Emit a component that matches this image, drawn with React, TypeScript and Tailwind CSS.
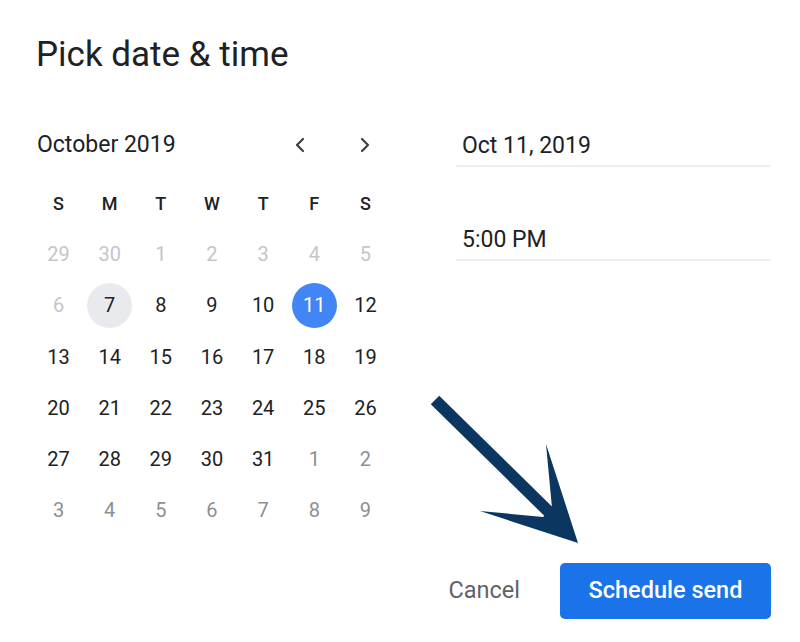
import { ChevronLeft, ChevronRight } from "lucide-react";

const WEEKDAYS = ["S", "M", "T", "W", "T", "F", "S"];

type Day = { n: number; kind: "past" | "cur" | "next"; state?: "today" | "selected" };

const DAYS: Day[] = [
  ...[29, 30, 1, 2, 3, 4, 5, 6].map((n) => ({ n, kind: "past" as const })),
  ...Array.from({ length: 31 }, (_, i) => i + 1)
    .filter((n) => n >= 7)
    .map((n) => ({
      n,
      kind: "cur" as const,
      state: n === 7 ? ("today" as const) : n === 11 ? ("selected" as const) : undefined,
    })),
  ...[1, 2, 3, 4, 5, 6, 7, 8, 9].map((n) => ({ n, kind: "next" as const })),
];

function DayCell({ day }: { day: Day }) {
  let circle = "";
  let text = "text-[#202124]";
  if (day.kind === "past") text = "text-[#c4c6c9]";
  if (day.kind === "next") text = "text-[#8c8f93]";
  if (day.state === "today") circle = "bg-[#e8eaed]";
  if (day.state === "selected") {
    circle = "bg-[#4285f4]";
    text = "text-white";
  }
  return (
    <div className="flex h-[51.2px] items-center justify-center">
      <div
        className={`flex h-[45px] w-[45px] items-center justify-center rounded-full text-[20px] ${circle} ${text}`}
      >
        {day.n}
      </div>
    </div>
  );
}

function Field({ value }: { value: string }) {
  return (
    <div className="border-b-2 border-[#eeeeee] pb-[4px] pl-[6px]">
      <div className="h-[30px] text-[23px] leading-[30px] text-[#202124]">{value}</div>
    </div>
  );
}

export default function App() {
  return (
    <div
      className="relative h-[642px] w-[800px] overflow-hidden bg-white"
      style={{ fontFamily: "Roboto, 'Noto Sans', sans-serif" }}
    >
      <h1 className="pl-[36px] pt-[35px] text-[35px] leading-[40px] text-[#202124]">
        Pick date &amp; time
      </h1>

      <div className="mt-[50px] flex">
        {/* calendar */}
        <div className="ml-[33px] w-[358px]">
          <div className="flex h-[40px] items-center">
            <span className="pl-[4px] text-[23px] text-[#202124]">October 2019</span>
            <div className="ml-auto flex items-center gap-[41px] pr-[14px] text-[#3c4043]">
              <ChevronLeft size={24} strokeWidth={2.2} />
              <ChevronRight size={24} strokeWidth={2.2} />
            </div>
          </div>
          <div className="mt-[12.5px] grid grid-cols-7">
            {WEEKDAYS.map((d, i) => (
              <div
                key={i}
                className="flex h-[51.2px] items-center justify-center text-[18px] font-medium text-[#202124]"
              >
                {d}
              </div>
            ))}
            {DAYS.map((d, i) => (
              <DayCell key={i} day={d} />
            ))}
          </div>
        </div>

        {/* fields */}
        <div className="ml-[65px] mt-[6px] flex w-[314px] flex-col gap-[58px]">
          <Field value="Oct 11, 2019" />
          <Field value="5:00 PM" />
        </div>
      </div>

      <div className="mt-[27px] flex items-center justify-end gap-[40px] pr-[29px]">
        <button className="text-[23.5px] text-[#5f6368]">Cancel</button>
        <button className="h-[56px] w-[211px] rounded-[5px] bg-[#1a73e8] text-[23.5px] font-medium text-white">
          Schedule send
        </button>
      </div>

      {/* annotation arrow */}
      <svg className="pointer-events-none absolute left-0 top-0" width="800" height="642">
        <line x1="435" y1="400" x2="550" y2="513" stroke="#0b365f" strokeWidth="12" />
        <polygon points="578,543 480,511 543,517 552,508 546,444" fill="#0b365f" />
      </svg>
    </div>
  );
}
